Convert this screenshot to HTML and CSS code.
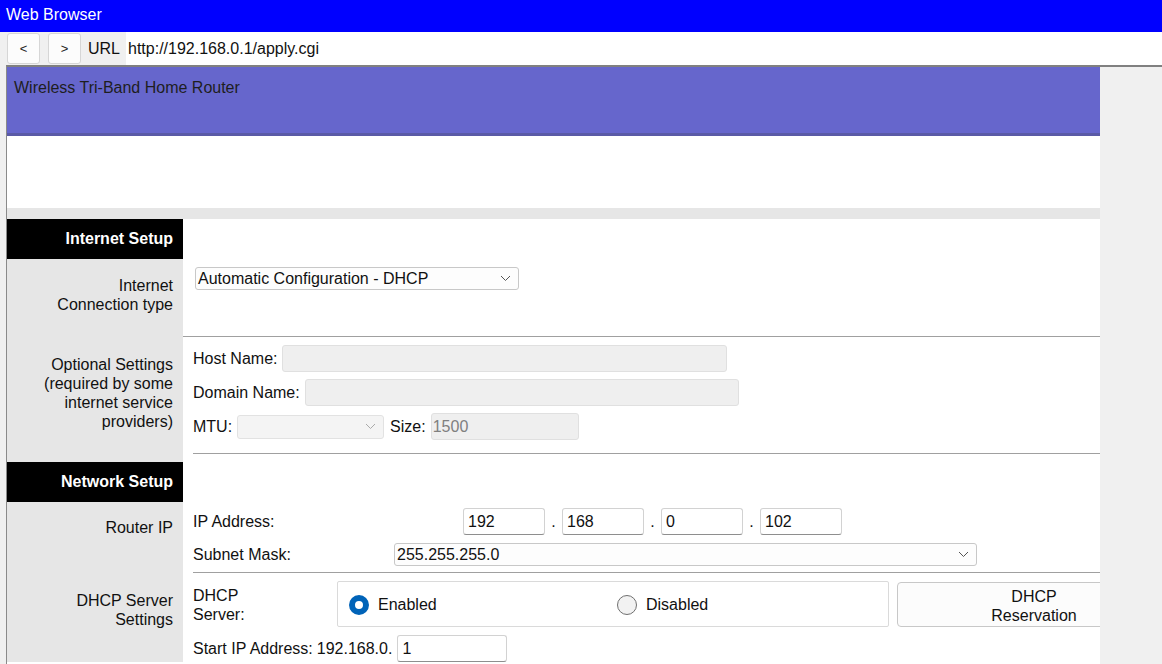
FILE: index.html
```html
<!DOCTYPE html>
<html>
<head>
<meta charset="utf-8">
<title>Web Browser</title>
<link rel="stylesheet" href="styles.css">
</head>
<body>
<div class="titlebar">Web Browser</div>
<div class="toolbar">
  <button class="nav">&lt;</button>
  <button class="nav">&gt;</button>
  <span class="url-label">URL</span>
  <div class="url">http://192.168.0.1/apply.cgi</div>
</div>
<div class="frame">
  <div class="page">
    <div class="banner">Wireless Tri-Band Home Router</div>
    <div class="spacer"></div>
    <div class="band"></div>
    <div class="form">
      <div class="sec-title">Internet Setup</div>
      <div class="sec-fill"></div>

      <div class="lbl lbl-conn">Internet<br>Connection type</div>
      <div class="ctl ctl-conn">
        <div class="select sel-conn"><span>Automatic Configuration - DHCP</span>
          <svg class="chev" width="11" height="7" viewBox="0 0 11 7"><path d="M1 1 L5.5 5.5 L10 1" fill="none" stroke="#555" stroke-width="1"/></svg>
        </div>
      </div>

      <div class="lbl lbl-opt">Optional Settings<br>(required by some<br>internet service<br>providers)</div>
      <div class="ctl ctl-opt">
        <div class="line"><span>Host Name:</span><div class="inp dis w-host"></div></div>
        <div class="line"><span>Domain Name:</span><div class="inp dis w-domain"></div></div>
        <div class="line"><span>MTU:</span>
          <div class="select dis sel-mtu"><span></span>
            <svg class="chev" width="11" height="7" viewBox="0 0 11 7"><path d="M1 1 L5.5 5.5 L10 1" fill="none" stroke="#aaa" stroke-width="1"/></svg>
          </div>
          <span class="size-lbl">Size:</span><div class="inp dis w-size">1500</div>
        </div>
        <div class="divider div-opt"></div>
      </div>

      <div class="sec-title">Network Setup</div>
      <div class="sec-fill"></div>

      <div class="lbl lbl-router">Router IP</div>
      <div class="ctl ctl-router">
        <div class="line line-ip"><span class="ip-lbl">IP Address:</span>
          <div class="inp w-oct">192</div><span class="dot">.</span>
          <div class="inp w-oct">168</div><span class="dot">.</span>
          <div class="inp w-oct">0</div><span class="dot">.</span>
          <div class="inp w-oct">102</div>
        </div>
        <div class="line line-mask"><span class="mask-lbl">Subnet Mask:</span>
          <div class="select sel-mask"><span>255.255.255.0</span>
            <svg class="chev" width="11" height="7" viewBox="0 0 11 7"><path d="M1 1 L5.5 5.5 L10 1" fill="none" stroke="#555" stroke-width="1"/></svg>
          </div>
        </div>
        <div class="divider div-router"></div>
      </div>

      <div class="lbl lbl-dhcp">DHCP Server<br>Settings</div>
      <div class="ctl ctl-dhcp">
        <div class="line line-radio">
          <span class="dhcp-lbl">DHCP<br>Server:</span>
          <div class="radio-box">
            <label class="opt opt-1"><span class="radio on"></span>Enabled</label>
            <label class="opt"><span class="radio"></span>Disabled</label>
          </div>
          <button class="resv">DHCP<br>Reservation</button>
        </div>
        <div class="line line-start"><span class="start-lbl">Start IP Address:</span><span class="prefix">192.168.0.</span><div class="inp w-start">1</div></div>
      </div>
    </div>
  </div>
</div>
</body>
</html>
```

FILE: styles.css
```css
html, body {
  margin: 0;
  padding: 0;
  height: 100%;
  overflow: hidden;
}
body {
  background: #f0f0f0;
  font-family: "Liberation Sans", Arial, sans-serif;
  font-size: 16px;
  color: #111;
}
.titlebar {
  height: 32px;
  line-height: 30px;
  background: #0000ff;
  color: #fff;
  padding-left: 6px;
  box-sizing: border-box;
}
.toolbar {
  height: 33px;
  display: flex;
  align-items: center;
  background: #f0f0f0;
}
.nav {
  width: 33px;
  height: 31px;
  margin-left: 7px;
  border: 1px solid #d6d6d6;
  border-radius: 3px;
  background: #fcfcfc;
  font-family: "Liberation Sans", Arial, sans-serif;
  font-size: 13px;
  color: #222;
  padding: 0;
}
.nav + .nav {
  margin-left: 8px;
}
.url-label {
  margin-left: 7px;
  width: 38px;
}
.url {
  flex: 1;
  align-self: stretch;
  background: #fff;
  line-height: 33px;
  padding-left: 2px;
}
.frame {
  margin-left: 6px;
  border-top: 2px solid #808080;
  border-left: 1px solid #8a8a8a;
  height: 597px;
  overflow: hidden;
}
.page {
  width: 1093px;
  height: 100%;
  background: #fff;
  overflow: hidden;
}
.banner {
  height: 69px;
  box-sizing: border-box;
  background: #6666cc;
  border-bottom: 3px solid #5a5aa6;
  padding: 11px 7px 0;
  line-height: 19px;
  color: #1e1e1e;
}
.spacer {
  height: 72px;
}
.band {
  height: 11px;
  background: #e6e6e6;
}
.form {
  display: grid;
  grid-template-columns: 176px 1fr;
}
.sec-title {
  height: 40px;
  background: #000;
  color: #fff;
  font-weight: bold;
  text-align: right;
  padding-right: 10px;
  line-height: 40px;
}
.sec-fill {
  background: #fff;
}
.lbl {
  background: #e6e6e6;
  text-align: right;
  padding-right: 10px;
  line-height: 19px;
}
.lbl-conn { padding-top: 17px; }
.lbl-opt { padding-top: 18px; }
.lbl-router { padding-top: 16px; }
.lbl-dhcp { padding-top: 18px; }

.ctl {
  padding-left: 10px;
}
.ctl-conn {
  padding: 8px 0 46px 12px;
  border-bottom: 1px solid #a0a0a0;
}
.ctl-opt {
  padding-top: 8px;
  padding-bottom: 8px;
}
.ctl-router {
  padding-top: 6px;
}
.ctl-dhcp {
  padding-top: 8px;
}
.line {
  display: flex;
  align-items: center;
  gap: 5px;
}
.ctl-opt .line + .line {
  margin-top: 7px;
}
.divider {
  height: 1px;
  background: #a0a0a0;
}
.div-opt { margin-top: 13px; }
.div-router { margin-top: 6px; }

.select {
  display: flex;
  align-items: center;
  justify-content: space-between;
  box-sizing: border-box;
  height: 23px;
  border: 1px solid #c8c8c8;
  border-radius: 3px;
  background: #fdfdfd;
  padding: 0 7px 0 2px;
  white-space: nowrap;
}
.sel-conn { width: 324px; }
.sel-mtu {
  width: 147px;
  height: 24px;
  background: #f4f4f4;
  border-color: #e2e2e2;
}
.sel-mask { width: 583px; }

.inp {
  box-sizing: border-box;
  height: 27px;
  line-height: 25px;
  border: 1px solid #d2d2d2;
  border-bottom-color: #8e8e8e;
  border-radius: 3px;
  background: #fff;
  padding-left: 4px;
}
.inp.dis {
  background: #efefef;
  border-color: #e0e0e0;
  color: #808080;
  padding-left: 1px;
}
.w-host { width: 445px; }
.w-domain { width: 434px; }
.w-size { width: 148px; }
.size-lbl { margin-left: 1px; }

.line-ip { gap: 0; }
.ip-lbl { width: 270px; }
.w-oct { width: 82px; }
.dot {
  width: 17px;
  text-align: center;
}
.line-mask {
  gap: 0;
  margin-top: 8px;
}
.mask-lbl { width: 201px; }

.line-radio { gap: 0; }
.dhcp-lbl {
  width: 144px;
  line-height: 19px;
  padding-top: 1px;
}
.radio-box {
  box-sizing: border-box;
  width: 552px;
  height: 46px;
  border: 1px solid #dadada;
  border-radius: 2px;
  display: flex;
  align-items: center;
  padding-left: 11px;
  padding-top: 2px;
}
.opt {
  display: flex;
  align-items: center;
  gap: 9px;
}
.opt-1 { width: 268px; }
.radio {
  box-sizing: border-box;
  width: 20px;
  height: 20px;
  border-radius: 50%;
  border: 1px solid #707070;
  background: #f2f2f2;
}
.radio.on {
  border: 6px solid #0063b8;
  background: #fff;
}
.resv {
  flex: none;
  box-sizing: border-box;
  width: 274px;
  height: 45px;
  margin-left: 8px;
  border: 1px solid #c8c8c8;
  border-radius: 4px;
  background: #fcfcfc;
  font-family: "Liberation Sans", Arial, sans-serif;
  font-size: 16px;
  line-height: 19px;
  color: #111;
  padding: 3px 0 0;
}
.line-start {
  gap: 0;
  margin-top: 8px;
}
.start-lbl { margin-right: 4px; }
.prefix { margin-right: 5px; }
.w-start { width: 110px; }
```
